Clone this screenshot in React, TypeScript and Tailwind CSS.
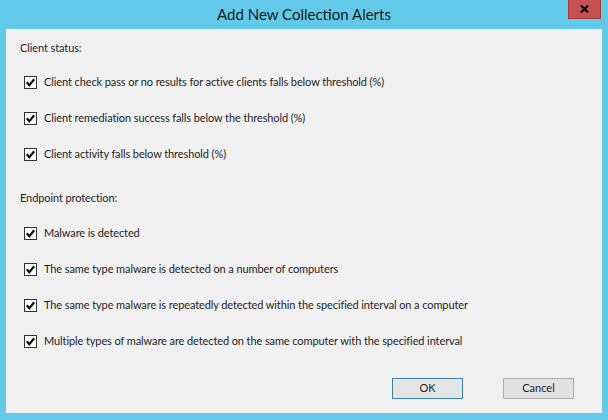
const clientItems = [
  "Client check pass or no results for active clients falls below threshold (%)",
  "Client remediation success falls below the threshold (%)",
  "Client activity falls below threshold (%)",
];

const endpointItems = [
  "Malware is detected",
  "The same type malware is detected on a number of computers",
  "The same type malware is repeatedly detected within the specified interval on a computer",
  "Multiple types of malware are detected on the same computer with the specified interval",
];

function CheckRow({ label }: { label: string }) {
  return (
    <div className="flex h-9 items-center pl-[18px]">
      <span className="flex h-[13px] w-[13px] items-center justify-center border border-[#333] bg-white">
        <svg width="11" height="11" viewBox="0 0 11 11">
          <path d="M1.8 5.3 L4.3 8.2 L9.2 2.3" fill="none" stroke="#111" strokeWidth="2.2" />
        </svg>
      </span>
      <span className="ml-[7px] text-[11px] tracking-[-0.1px] text-[#1e1e1e]">{label}</span>
    </div>
  );
}

export default function App() {
  return (
    <div
      className="flex h-[420px] w-[608px] flex-col bg-[#63c9e9] px-[6px] pb-[7px]"
      style={{ fontFamily: 'Lato, "Noto Sans", sans-serif' }}
    >
      <div className="relative flex h-[29px] shrink-0 items-center justify-center">
        <span className="text-[15px] text-[#1a1a1a]">Add New Collection Alerts</span>
        <div className="absolute right-[1px] top-0 flex h-[19px] w-[33px] items-center justify-center border border-t-0 border-[#a03c3c] bg-[#c75050]">
          <svg width="9" height="8" viewBox="0 0 9 8">
            <path d="M1 0.5 L8 7.5 M8 0.5 L1 7.5" stroke="#000" strokeWidth="2" />
          </svg>
        </div>
      </div>
      <div className="flex flex-1 flex-col bg-[#f0f0f0] pt-[11px]">
        <div className="pl-[14px] text-[11px] tracking-[-0.1px] text-[#1e1e1e]">Client status:</div>
        <div className="mt-[8px]">
          {clientItems.map((t) => (
            <CheckRow key={t} label={t} />
          ))}
        </div>
        <div className="mt-[17px] pl-[14px] text-[11px] tracking-[-0.1px] text-[#1e1e1e]">Endpoint protection:</div>
        <div className="mt-[9px]">
          {endpointItems.map((t) => (
            <CheckRow key={t} label={t} />
          ))}
        </div>
        <div className="mt-auto flex justify-end gap-[40px] pb-[14px] pr-[28px]">
          <button className="h-[21px] w-[71px] border border-[#3c7fb1] bg-[#e5e5e5] text-[11px] text-[#1e1e1e]">
            OK
          </button>
          <button className="h-[21px] w-[71px] border border-[#adadad] bg-[#e1e1e1] text-[11px] text-[#1e1e1e]">
            Cancel
          </button>
        </div>
      </div>
    </div>
  );
}
